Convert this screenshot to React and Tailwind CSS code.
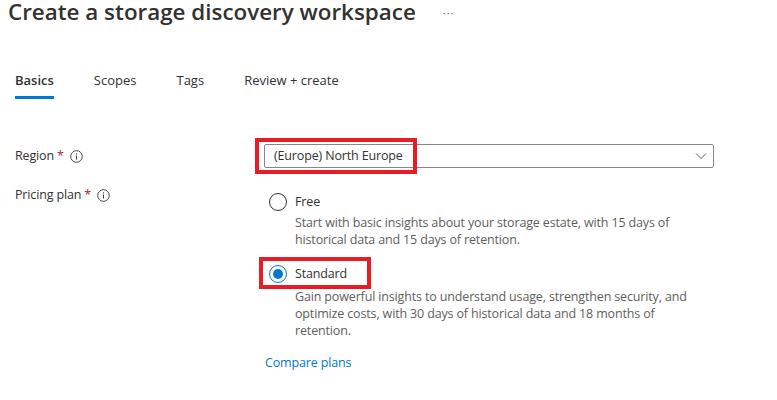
import React from 'react';

const font = { fontFamily: '"Open Sans", "Noto Sans", sans-serif' };

// body text in the portal is 13px Segoe; Open Sans runs wider, so shrink a touch
const body = 'text-[12.5px] tracking-[-0.15px]';

function InfoIcon() {
  return (
    <svg width="13" height="13" viewBox="0 0 13 13" className="inline-block">
      <circle cx="6.5" cy="6.5" r="5.8" fill="none" stroke="#323130" strokeWidth="0.9" />
      <line x1="6.5" y1="5.6" x2="6.5" y2="9.5" stroke="#323130" strokeWidth="1" />
      <circle cx="6.5" cy="3.9" r="0.65" fill="#323130" />
    </svg>
  );
}

function Label({ text }) {
  return (
    <div className={'flex items-center leading-[20px] text-[#323130] ' + body}>
      <span>{text}</span>
      <span className="ml-[3px] text-[#a4262c]">*</span>
      <span className="ml-[6px] flex items-center">
        <InfoIcon />
      </span>
    </div>
  );
}

function Radio({ checked }) {
  return (
    <span
      className={
        'flex h-[18px] w-[18px] items-center justify-center rounded-full border ' +
        (checked ? 'border-[#0078d4]' : 'border-[#323130]')
      }
    >
      {checked && <span className="h-[10px] w-[10px] rounded-full bg-[#0078d4]" />}
    </span>
  );
}

export default function App() {
  const tabs = ['Basics', 'Scopes', 'Tags', 'Review + create'];

  return (
    <div className="h-[400px] w-[777px] overflow-hidden bg-white" style={font}>
      {/* header */}
      <div className="flex h-[30px] items-start pl-[8px]">
        <h1 className="text-[22.4px] font-semibold leading-[24px] text-[#323130]">
          Create a storage discovery workspace
        </h1>
        <span className="ml-[27px] mt-[6px] text-[11px] leading-[14px] tracking-[1px] text-[#605e5c]">
          ···
        </span>
      </div>

      {/* tabs */}
      <div className="mt-[40px] flex gap-[40px] pl-[15px]">
        {tabs.map((t, i) => (
          <div key={t} className="flex flex-col">
            <span
              className={
                'text-[13px] leading-[20px] text-[#323130] ' + (i === 0 ? 'font-semibold' : '')
              }
            >
              {t}
            </span>
            <span className={'mt-[6px] h-[3px] ' + (i === 0 ? 'bg-[#0078d4]' : '')} />
          </div>
        ))}
      </div>

      {/* region */}
      <div className="mt-[45px] flex items-center pl-[15px]">
        <div className="w-[249px]">
          <Label text="Region" />
        </div>
        <div className="relative">
          <div className="flex h-[24px] w-[450px] items-center justify-between rounded-[2px] border border-[#8a8886] pl-[9px] pr-[6px]">
            <span className={'text-[#323130] ' + body}>(Europe) North Europe</span>
            <svg width="12" height="8" viewBox="0 0 12 8">
              <polyline points="1,1.5 6,6.5 11,1.5" fill="none" stroke="#605e5c" strokeWidth="1" />
            </svg>
          </div>
          <div className="absolute -left-[9px] -top-[6px] h-[36px] w-[162px] border-4 border-[#e81c24]" />
        </div>
      </div>

      {/* pricing plan */}
      <div className="mt-[17px] flex pl-[15px]">
        <div className="w-[249px]">
          <Label text="Pricing plan" />
        </div>
        <div className="flex flex-col pt-[7px]">
          <div className="pl-[5px]">
            <div className="flex items-center gap-[8px] leading-[20px]">
              <Radio />
              <span className={'text-[#323130] ' + body}>Free</span>
            </div>
            <p className={'mt-[2px] whitespace-nowrap pl-[26px] leading-[17px] text-[#605e5c] ' + body}>
              Start with basic insights about your storage estate, with 15 days of
              <br />
              historical data and 15 days of retention.
            </p>

            <div className="relative mt-[16px] flex items-center gap-[8px] leading-[20px]">
              <Radio checked />
              <span className={'text-[#323130] ' + body}>Standard</span>
              <div className="absolute -left-[10px] -top-[7px] h-[32px] w-[112px] border-4 border-[#e81c24]" />
            </div>
            <p className={'mt-[4px] whitespace-nowrap pl-[26px] leading-[17px] text-[#605e5c] ' + body}>
              Gain powerful insights to understand usage, strengthen security, and
              <br />
              optimize costs, with 30 days of historical data and 18 months of
              <br />
              retention.
            </p>
          </div>
          <a className={'mt-[14px] pl-[1px] leading-[20px] text-[#0078d4] ' + body} href="#">
            Compare plans
          </a>
        </div>
      </div>
    </div>
  );
}
